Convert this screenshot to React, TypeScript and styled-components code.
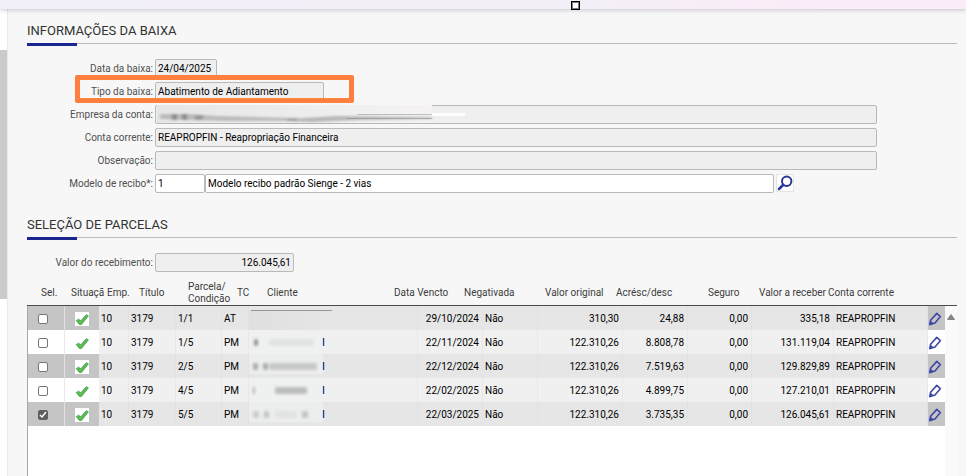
import React from "react";
import styled, { createGlobalStyle, css } from "styled-components";

const GlobalStyle = createGlobalStyle`
  *, *::before, *::after { box-sizing: border-box; }
  html, body, #root { height: 100%; }
  body {
    margin: 0;
    background: #f7f7f7;
    color: #000;
    font: 10px/14px Roboto, "Liberation Sans", sans-serif;
    overflow: hidden;
  }
  input, button { font: inherit; color: inherit; }
`;

const Page = styled.div`
  display: flex;
  flex-direction: column;
  height: 100%;
`;

const TopBar = styled.header`
  position: relative;
  z-index: 1;
  flex: none;
  height: 9px;
  background: linear-gradient(90deg, #f1eff8 0%, #f4eff7 60%, #faecf8 85%);
  box-shadow: 0 1px 4px rgba(60, 40, 70, 0.25);
`;

const Handle = styled.span`
  position: absolute;
  left: 59.1%;
  top: 1px;
  width: 9px;
  height: 9px;
  border: 1px solid #000;
  box-shadow: inset 0 0 0 1px #777;
  background: #fff;
`;

const Workspace = styled.div`
  display: flex;
  flex: 1;
  min-height: 0;
`;

const Rail = styled.div`
  display: flex;
  flex: none;
  width: 8px;
  padding-top: 41px;
  background: #fff;
  border-right: 1px solid #e9e9e9;
`;

const RailThumb = styled.div`
  width: 100%;
  height: 249px;
  background: #cbcbcb;
`;

const Main = styled.main`
  display: flex;
  flex: 1;
  flex-direction: column;
  gap: 25px;
  min-width: 0;
  padding: 14px 9px 0 19px;
`;

const Section = styled.section<{ $fill?: boolean }>`
  display: flex;
  flex: ${(p) => (p.$fill ? "1" : "none")};
  flex-direction: column;
  min-height: 0;
`;

const Heading = styled.h2`
  position: relative;
  flex: none;
  margin: 0;
  height: 21px;
  border-bottom: 1px solid #bababa;
  color: #333;
  font-size: 13px;
  font-weight: 400;
  line-height: 16px;

  &::after {
    content: "";
    position: absolute;
    left: 0;
    bottom: -3px;
    width: 50px;
    height: 3px;
    background: #1b2590;
  }
`;

const Form = styled.form`
  display: flex;
  flex: none;
  flex-direction: column;
  gap: 5px;
  padding: 15px 80px 0 0;
`;

const Row = styled.div`
  position: relative;
  display: flex;
  align-items: center;
  height: 18px;
`;

const Label = styled.label`
  flex: none;
  width: 126px;
  margin-right: 2px;
  padding-top: 2px;
  color: #505050;
  text-align: right;
`;

const Field = styled.input<{ $width?: number; $editable?: boolean; $end?: boolean }>`
  ${(p) => (p.$width ? css`flex: none; width: ${p.$width}px;` : css`flex: 1; min-width: 0;`)}
  height: 19px;
  padding: 0 2px;
  border: 1px solid #b9b9b9;
  border-radius: 2px;
  background: ${(p) => (p.$editable ? "#fff" : "#efefef")};
  text-align: ${(p) => (p.$end ? "right" : "left")};
  outline: none;
`;

const SearchButton = styled.button`
  display: grid;
  flex: none;
  place-items: center;
  width: 18px;
  height: 18px;
  margin: 0 4px 0 2px;
  padding: 0;
  border: 1px solid #e4e4e4;
  background: #fff;
`;

const SearchRow = styled(Row)`
  margin-right: 79px;
`;

const Highlight = styled.div`
  position: absolute;
  left: 48px;
  top: -7px;
  width: 279px;
  height: 28px;
  border: 5px solid #ff7f3f;
  border-radius: 2px;
  pointer-events: none;
`;

const Smudge = styled.svg`
  position: absolute;
  left: 130px;
  top: -1px;
`;

const Table = styled.table`
  display: flex;
  flex: 1;
  flex-direction: column;
  min-height: 0;
  margin-top: 7px;
`;

const Head = styled.thead`
  display: block;
  flex: none;
  border-bottom: 1px solid #4a4a4a;
`;

const HeadRow = styled.tr`
  display: grid;
  grid-template-columns: 30px 36px 32px 49px 49px 30px 1fr 70px 81px 71px 92px 51px 69px 129px;
  align-items: center;
  height: 27px;
  padding: 2px 0 0 14px;
`;

const HeadCell = styled.th`
  padding: 0;
  color: #3c3c3c;
  font-weight: 400;
  line-height: 12px;
  text-align: left;
  white-space: pre;
`;

const Body = styled.tbody`
  position: relative;
  display: block;
  flex: 1;
  border-left: 1px solid #a9a9a9;
  background: linear-gradient(270deg, #fafafa 12px, #fff 12px);
`;

const BodyRow = styled.tr<{ $dark: boolean }>`
  display: grid;
  grid-template-columns: 37px 34px 30px 47px 46px 27px 1fr 65px 55px 85px 65px 64px 82px 94px 17px;
  height: 24px;
  margin-right: 12px;
  background: ${(p) => (p.$dark ? "#e6e6e6" : "#f0f0f0")};
  --action: ${(p) => (p.$dark ? "#c5c5c5" : "#fff")};
  --rule: ${(p) => (p.$dark ? "#e2e2e2" : "#e8e8e8")};
`;

const Cell = styled.td<{ $end?: boolean; $action?: boolean }>`
  position: relative;
  display: flex;
  align-items: center;
  justify-content: ${(p) => (p.$end ? "flex-end" : "flex-start")};
  padding: ${(p) => (p.$action ? "2px 0 0" : "2px 3px 0 2px")};
  border-right: 1px solid var(--rule);
  background: ${(p) => (p.$action ? "var(--action)" : "transparent")};
  white-space: nowrap;
`;

const StatusCell = styled(Cell)`
  justify-content: center;
  border-right: 0;
`;

const EditCell = styled(Cell)`
  border-right: 0;
`;

const Check = styled.input`
  appearance: none;
  width: 10px;
  height: 10px;
  margin: 0 0 0 10px;
  border: 1px solid #767676;
  border-radius: 2px;
  background: #fff;

  &:checked {
    border-color: #5f5f5f;
    background: #5f5f5f url("data:image/svg+xml,%3Csvg xmlns='http://www.w3.org/2000/svg' viewBox='0 0 8 8'%3E%3Cpath d='M1 4l2 2 4-5' fill='none' stroke='white' stroke-width='1.5'/%3E%3C/svg%3E");
  }
`;

const StatusBox = styled.span`
  display: grid;
  place-items: center;
  width: 14px;
  height: 14px;
  background: #fff;
`;

const EditButton = styled.button`
  display: grid;
  place-items: center;
  padding: 0;
  border: 0;
  background: none;
`;

const ScrollButton = styled.button`
  position: absolute;
  left: 17px;
  top: 0;
  display: grid;
  place-items: center;
  width: 12px;
  height: 22px;
  padding: 0;
  border: 0;
  background: none;
`;

const Client = styled.svg`
  position: absolute;
  left: 0;
  top: 0;
`;

const ClientTail = styled.span`
  padding-left: 71px;
  color: #1d3566;
  font-weight: 700;
`;

const SearchIcon = () => (
  <svg width="16" height="16" viewBox="0 0 16 16" fill="none" stroke="#2b379b" aria-hidden="true">
    <circle cx="9.7" cy="6.3" r="4.7" strokeWidth="2" />
    <path d="M6 10L2 14" strokeWidth="2.6" strokeLinecap="round" />
  </svg>
);

const TickIcon = () => (
  <svg width="14" height="14" viewBox="0 0 14 14" aria-hidden="true">
    <path d="M1.2 8.6L3.6 7.2 5.8 8.8 11.4 2.6 13.4 4 6.4 12.6 4.4 12.4z" fill="#5dba55" stroke="#4a9f4c" strokeWidth=".8" strokeLinejoin="round" />
  </svg>
);

const PencilIcon = () => (
  <svg width="14" height="14" viewBox="0 0 14 14" fill="none" stroke="#3d49a8" strokeLinejoin="round" aria-hidden="true">
    <path d="M8.8 1.4L12.4 4.6 7 11 1.8 12.6 2.6 8.2z" strokeWidth="1.6" />
    <path d="M2.6 9l3 2.6L1.6 13z" fill="#3d49a8" strokeWidth=".5" />
  </svg>
);

const ScrollIcon = () => (
  <svg width="8" height="6" viewBox="0 0 8 6" aria-hidden="true">
    <path d="M4 .5L7.5 5.500H.5z" fill="#858585" stroke="#858585" strokeLinejoin="round" />
  </svg>
);

const titles = [
  "Sel.", "Situaçã", "Emp.", "Título", "Parcela/\nCondição", "TC", "Cliente", "Data Vencto",
  "Negativada", "Valor original", "Acrésc/desc", "Seguro", "Valor a receber", "Conta corrente",
];

const parcels = [
  { part: "1/1", tc: "AT", due: "29/10/2024", original: "310,30", change: "24,88", total: "335,18", marks: [] },
  { part: "1/5", tc: "PM", due: "22/11/2024", original: "122.310,26", change: "8.808,78", total: "131.119,04", marks: [[5, 4, 0.55], [20, 45, 0.08]] },
  { part: "2/5", tc: "PM", due: "22/12/2024", original: "122.310,26", change: "7.519,63", total: "129.829,89", marks: [[4, 5, 0.4], [14, 5, 0.4], [20, 48, 0.22]] },
  { part: "4/5", tc: "PM", due: "22/02/2025", original: "122.310,26", change: "4.899,75", total: "127.210,01", marks: [[4, 2, 0.4], [26, 32, 0.3]] },
  { part: "5/5", tc: "PM", due: "22/03/2025", original: "122.310,26", change: "3.735,35", total: "126.045,61", marks: [[4, 6, 0.2], [15, 5, 0.25], [26, 22, 0.06], [53, 6, 0.25]] },
];

const ClientMask = ({ marks, first, id }: { marks: number[][]; first: boolean; id: string }) => (
  <Client width="84" height="24" aria-hidden="true">
    <defs>
      <filter id={`soft-${id}`} x="-100%" y="-100%" width="300%" height="300%"><feGaussianBlur stdDeviation="1.8" /></filter>
      <linearGradient id={`fade-${id}`} x2="1"><stop stopColor="#dedcdd" /><stop offset="1" stopColor="#e8e6e6" /></linearGradient>
    </defs>
    <rect width={first ? 83 : 74} height="20" y={first ? 4 : 0} fill={first ? `url(#fade-${id})` : "#eeefef"} opacity=".7" />
    {first && <path d="M2 4.500H83" stroke="#777" opacity=".7" />}
    {marks.map(([x, w, o]) => (
      <rect key={x} x={x} y="9" width={w} height="7" rx="2" fill="#444" opacity={o} filter={`url(#soft-${id})`} />
    ))}
  </Client>
);

export default function App() {
  return (
    <>
      <GlobalStyle />
      <Page>
        <TopBar><Handle /></TopBar>
        <Workspace>
          <Rail><RailThumb /></Rail>
          <Main>
            <Section>
              <Heading>INFORMAÇÕES DA BAIXA</Heading>
              <Form>
                <Row>
                  <Label htmlFor="data">Data da baixa:</Label>
                  <Field id="data" $width={62} readOnly defaultValue="24/04/2025" />
                </Row>
                <Row>
                  <Label htmlFor="tipo">Tipo da baixa:</Label>
                  <Field id="tipo" $width={169} readOnly defaultValue="Abatimento de Adiantamento" />
                  <Highlight />
                </Row>
                <Row>
                  <Label htmlFor="empresa">Empresa da conta:</Label>
                  <Field id="empresa" readOnly />
                  <Smudge width="308" height="20" aria-hidden="true">
                    <defs>
                      <linearGradient id="veil" x2="1"><stop stopColor="#e6e6e6" /><stop offset="1" stopColor="#f5f3f3" /></linearGradient>
                      <filter id="haze" x="-10%" y="-60%" width="120%" height="220%"><feGaussianBlur stdDeviation="1.5 1" /></filter>
                    </defs>
                    <rect width="275" height="18" y="1" fill="url(#veil)" />
                    <g filter="url(#haze)" fill="#666">
                      <path d="M3 10H30L60 12 140 14V17H70L3 15z" opacity=".35" />
                      <rect x="15" y="10" width="5" height="6" opacity=".55" />
                      <rect x="25" y="10" width="5" height="6" opacity=".55" />
                      <rect x="38" y="11" width="8" height="5" opacity=".4" />
                      <path d="M130 15l50-3 95 1v2l-70 1-50 2-25-1z" opacity=".4" />
                    </g>
                    <path d="M200 10.500H275M190 14.500H275" stroke="#777" opacity=".4" />
                    <rect x="275" y="9" width="33" height="3" fill="#fff" />
                  </Smudge>
                </Row>
                <Row>
                  <Label htmlFor="conta">Conta corrente:</Label>
                  <Field id="conta" readOnly defaultValue="REAPROPFIN - Reapropriação Financeira" />
                </Row>
                <Row>
                  <Label htmlFor="obs">Observação:</Label>
                  <Field id="obs" readOnly />
                </Row>
                <SearchRow>
                  <Label htmlFor="modelo">Modelo de recibo*:</Label>
                  <Field id="modelo" $width={50} $editable defaultValue="1" />
                  <Field $editable aria-label="Descrição do modelo" defaultValue="Modelo recibo padrão Sienge - 2 vias" />
                  <SearchButton type="button" aria-label="Pesquisar"><SearchIcon /></SearchButton>
                </SearchRow>
              </Form>
            </Section>
            <Section $fill>
              <Heading>SELEÇÃO DE PARCELAS</Heading>
              <Form>
                <Row>
                  <Label htmlFor="valor">Valor do recebimento:</Label>
                  <Field id="valor" $width={139} $end readOnly defaultValue="126.045,61" />
                </Row>
              </Form>
              <Table>
                <Head>
                  <HeadRow>
                    {titles.map((t) => <HeadCell key={t} scope="col">{t}</HeadCell>)}
                  </HeadRow>
                </Head>
                <Body>
                  {parcels.map((p, i) => (
                    <BodyRow key={p.part} $dark={i % 2 === 0}>
                      <Cell $action><Check type="checkbox" aria-label={`Selecionar ${p.part}`} defaultChecked={i === 4} /></Cell>
                      <StatusCell $action><StatusBox><TickIcon /></StatusBox></StatusCell>
                      <Cell>10</Cell>
                      <Cell>3179</Cell>
                      <Cell>{p.part}</Cell>
                      <Cell>{p.tc}</Cell>
                      <Cell><ClientMask id={`${i}`} marks={p.marks} first={i === 0} />{i > 0 && <ClientTail>l</ClientTail>}</Cell>
                      <Cell $end>{p.due}</Cell>
                      <Cell>Não</Cell>
                      <Cell $end>{p.original}</Cell>
                      <Cell $end>{p.change}</Cell>
                      <Cell $end>0,00</Cell>
                      <Cell $end>{p.total}</Cell>
                      <Cell>REAPROPFIN</Cell>
                      <EditCell $action>
                        <EditButton type="button" aria-label={`Editar ${p.part}`}><PencilIcon /></EditButton>
                        {i === 0 && (
                          <ScrollButton type="button" aria-label="Rolar para cima"><ScrollIcon /></ScrollButton>
                        )}
                      </EditCell>
                    </BodyRow>
                  ))}
                </Body>
              </Table>
            </Section>
          </Main>
        </Workspace>
      </Page>
    </>
  );
}
